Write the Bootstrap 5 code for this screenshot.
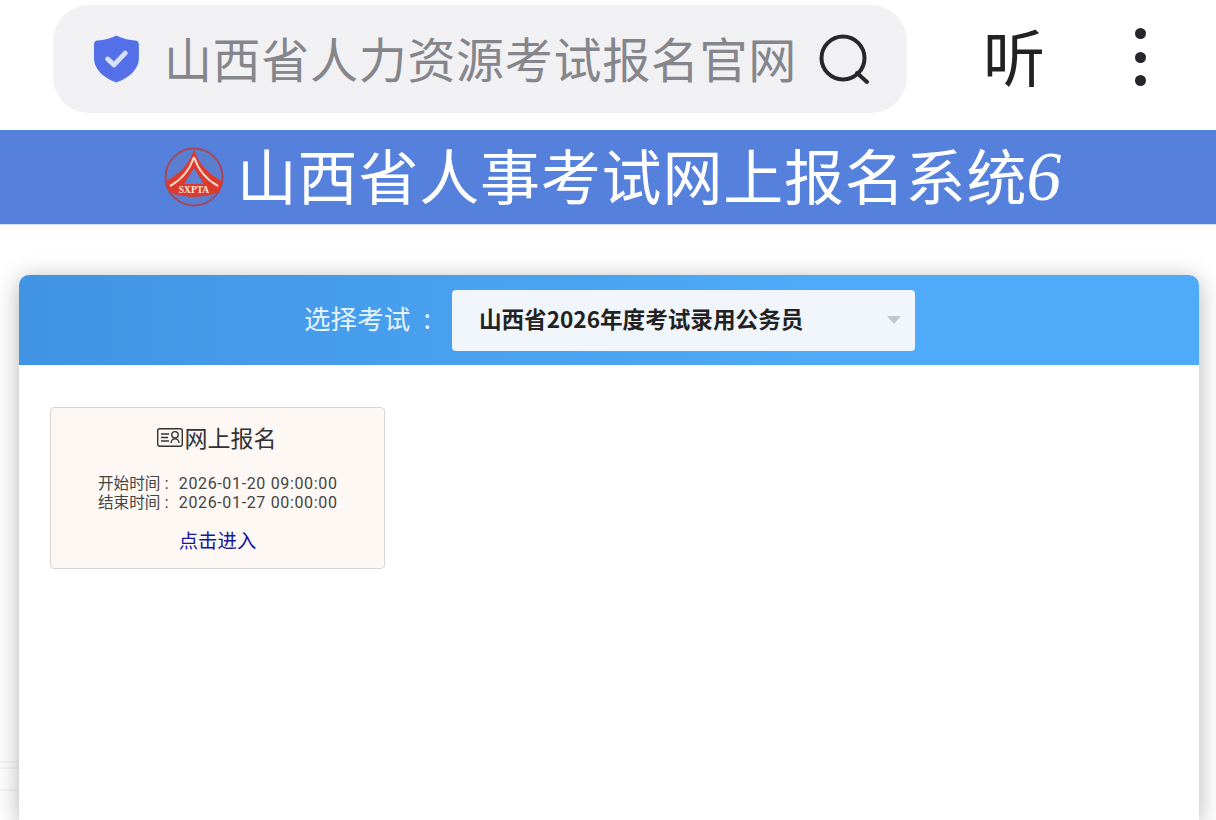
<!DOCTYPE html>
<html lang="zh-CN">
  <head>
    <meta charset="UTF-8" />
    <title>山西省人事考试网上报名系统</title>
    <link href="https://cdn.jsdelivr.net/npm/bootstrap@5.3.0/dist/css/bootstrap.min.css" rel="stylesheet" />
    <style>
      html, body { height: 820px; overflow: hidden; }
      body { background: #fff; font-family: "Noto Sans CJK SC", "Noto Sans", sans-serif; color: #222; position: relative; }
      .top-strip { height: 130px; padding: 5px 0 17px 53px; }
      .addr-pill { width: 854px; height: 108px; background: #f1f1f4; border-radius: 36px; padding: 0 36px 0 41px; }
      .addr-text { font-size: 48px; line-height: 1; color: #85868c; margin-left: 25px; margin-top: -4px; letter-spacing: .7px; white-space: nowrap; }
      .addr-search { margin-left: 22px; margin-top: 1px; }
      .listen { font-size: 62px; line-height: 1; color: #222; margin-left: 76px; margin-top: -8px; }
      .dots { margin-left: 90px; gap: 12.5px; margin-top: -4px; }
      .dots i { display: block; width: 11px; height: 11px; border-radius: 50%; background: #26272b; }
      .site-banner { height: 95px; background: #5581dd; border-bottom: 1px solid #cfe0f5; color: #fff; padding-left: 9px; }
      .site-title { font-size: 60px; line-height: 1; letter-spacing: .8px; margin-left: 13px; white-space: nowrap; }
      .site-title em { font-family: "Liberation Serif", serif; font-size: 70px; letter-spacing: 0; margin-left: -1px; }
      .exam-panel { margin: 50px 17px 0 19px; height: 545px; background: #fff; border-radius: 10px 10px 0 0; box-shadow: 0 4px 24px rgba(0, 0, 0, .3); position: relative; }
      .exam-head { height: 90px; background: linear-gradient(90deg, #4194e3, #4fabf9 70%); border-radius: 10px 10px 0 0; padding-left: 285px; }
      .exam-label { font-size: 26.5px; line-height: 1; color: #e6f3fd; letter-spacing: .1px; margin-right: 21px; margin-top: -4px; white-space: nowrap; }
      .exam-label span { margin-left: 13px; }
      .exam-select { width: 463px; height: 61px; background: #f1f6fd; border-radius: 4px; padding: 0 14px 0 27px; font-size: 22.6px; font-weight: 700; color: #222; white-space: nowrap; }
      .exam-select > span:first-child { margin-top: -2px; }
      .select-caret { width: 0; height: 0; border: 7.5px solid transparent; border-top: 8px solid #c3c5c9; border-bottom: 0; }
      .exam-body { padding: 42px 31px; }
      .entry-tile { width: 335px; height: 162px; background: #fdf8f4; border: 1px solid #d9d5d2; border-radius: 4px; padding-top: 13px; }
      .tile-title { font-size: 23px; line-height: 32px; color: #333; gap: 2px; margin-left: -2px; }
      .tile-times { margin-top: 21px; margin-left: 47px; white-space: nowrap; }
      .time-row { font-family: "Liberation Sans", "Noto Sans CJK SC", sans-serif; font-size: 15.6px; line-height: 19px; color: #444; }
      .time-row i { font-style: normal; margin-left: 4px; }
      .time-row b { font-weight: 400; font-family: Roboto, sans-serif; font-size: 16px; letter-spacing: .65px; margin-left: 10px; }
      .tile-link { font-size: 19.4px; line-height: 26px; color: #16169c; text-decoration: none; margin-top: 15px; }
      .edge-marks { position: absolute; left: 0; top: 755px; }
    </style>
  </head>
  <body>
    <div class="top-strip d-flex align-items-center">
      <div class="addr-pill d-flex align-items-center flex-shrink-0">
        <svg width="46" height="50" viewBox="0 0 46 50">
          <path d="M23 1 C29 4 36 6 42 6 C45 6 46 8 46 10 V24 C46 36 35 45 23 49 C11 45 0 36 0 24 V10 C0 8 1 6 4 6 C10 6 17 4 23 1 Z" fill="#5470e8" />
          <path d="M14 25 L20.500 31 L32 19" fill="none" stroke="#d9e0fb" stroke-width="5" stroke-linecap="round" stroke-linejoin="round" />
        </svg>
        <span class="addr-text">山西省人力资源考试报名官网</span>
        <svg class="addr-search flex-shrink-0" width="52" height="52" viewBox="0 0 52 52">
          <circle cx="24" cy="24" r="21.500" fill="none" stroke="#26272b" stroke-width="4" />
          <path d="M38 39 L48 48" stroke="#26272b" stroke-width="4" stroke-linecap="round" />
        </svg>
      </div>
      <span class="listen">听</span>
      <div class="dots d-flex flex-column"><i></i><i></i><i></i></div>
    </div>

    <div class="site-banner d-flex align-items-center justify-content-center">
      <svg width="60" height="60" viewBox="0 0 60 60">
        <circle cx="30" cy="30" r="28.500" fill="#5b7fd0" stroke="#a8475a" stroke-width="2" />
        <path d="M30 2 C26 17 14 28 2 34 L4 43 C12 52 48 52 56 43 L58 34 C46 28 34 17 30 2 Z" fill="#dc3a2e" />
        <path d="M30 21 L40 37 H20 Z" fill="#5f83d4" />
        <path d="M30 10 C26 22 17 33 6 39 M30 10 C34 22 43 33 54 39" fill="none" stroke="#f6d8c4" stroke-width="2" />
        <text x="30" y="46" text-anchor="middle" font-family="Liberation Serif, serif" font-size="9.500" font-weight="700" fill="#fde9dc">SXPTA</text>
      </svg>
      <span class="site-title">山西省人事考试网上报名系统<em>6</em></span>
    </div>

    <svg class="edge-marks" width="19" height="40" viewBox="0 0 19 40" fill="none" stroke="#000" stroke-opacity=".035" stroke-width="2">
      <path d="M0 7 H19 M0 13 H19 M0 35 H19" />
    </svg>

    <div class="exam-panel">
      <div class="exam-head d-flex align-items-center">
        <span class="exam-label">选择考试<span>:</span></span>
        <div class="exam-select d-flex align-items-center justify-content-between">
          <span>山西省2026年度考试录用公务员</span>
          <span class="select-caret"></span>
        </div>
      </div>
      <div class="exam-body">
        <div class="entry-tile d-flex flex-column align-items-center">
          <div class="tile-title d-flex align-items-center">
            <svg width="26" height="19" viewBox="0 0 26 19" fill="none" stroke="#333" stroke-width="1.400">
              <rect x=".7" y=".7" width="24.600" height="17.600" rx="2" />
              <path d="M4 6 H12 M4 9.500 H11 M4 13 H12" />
              <circle cx="18" cy="6.800" r="3.200" />
              <path d="M14 15 C14.500 9.500 21.500 9.500 22 15" />
            </svg>
            <span>网上报名</span>
          </div>
          <div class="tile-times align-self-start">
            <div class="time-row">开始时间<i>:</i><b>2026-01-20 09:00:00</b></div>
            <div class="time-row">结束时间<i>:</i><b>2026-01-27 00:00:00</b></div>
          </div>
          <a class="tile-link" href="#">点击进入</a>
        </div>
      </div>
    </div>
    <script src="https://cdn.jsdelivr.net/npm/bootstrap@5.3.0/dist/js/bootstrap.bundle.min.js"></script>
  </body>
</html>
